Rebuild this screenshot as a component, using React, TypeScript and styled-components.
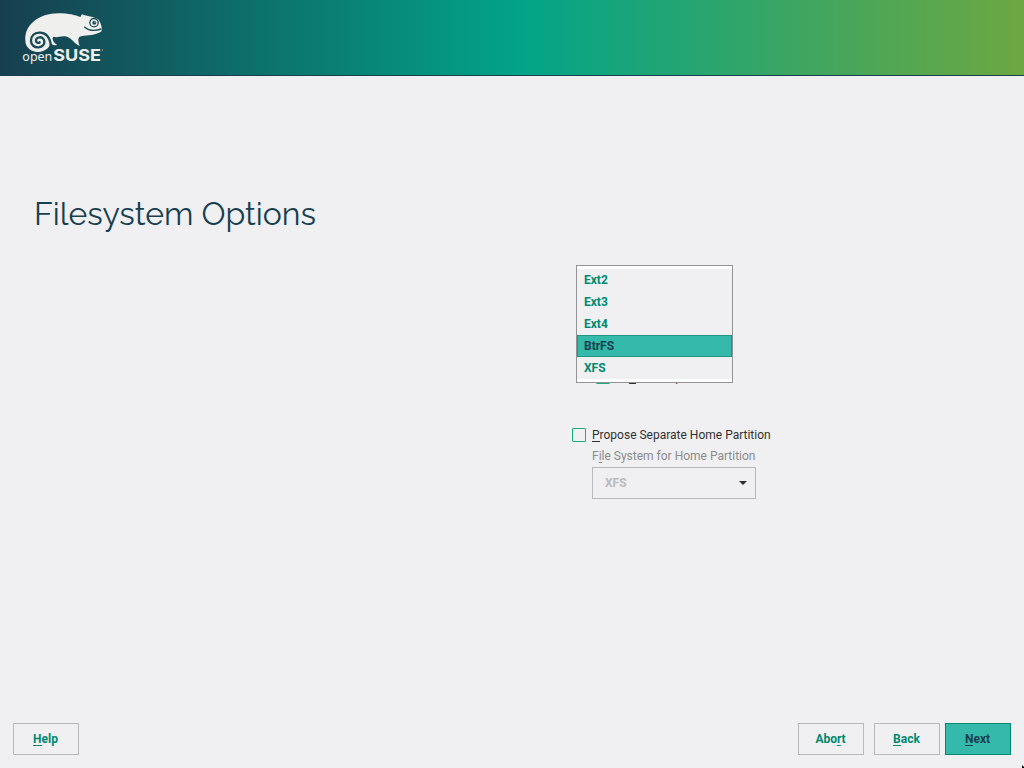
import React from 'react';
import styled, { createGlobalStyle } from 'styled-components';

const Global = createGlobalStyle`
  html, body { margin: 0; padding: 0; }
  body { background: #f0f0f2; font-family: Roboto, "Liberation Sans", sans-serif; overflow: hidden; }
  *, *::before, *::after { box-sizing: border-box; }
`;

const Screen = styled.div`
  width: 1024px;
  height: 768px;
  display: flex;
  flex-direction: column;
  background: #f0f0f2;
  position: relative;
  overflow: hidden;
  font-size: 12px;
`;

const Header = styled.header`
  height: 76px;
  flex: none;
  padding: 5px 15px 0;
  border-bottom: 1px solid #173f4f;
  background: linear-gradient(90deg, #173f4f 0%, #02a489 51%, #6da741 100%);
`;

const LogoSvg = styled.svg`
  display: block;
  overflow: visible;
`;

const Main = styled.main`
  flex: 1;
  display: flex;
  flex-direction: column;
`;

const Title = styled.h1`
  margin: 118px 0 0 34px;
  height: 40px;
  line-height: 40px;
  font-family: Raleway, Lato, sans-serif;
  font-size: 32px;
  font-weight: 400;
  color: #173f4f;
  white-space: nowrap;
`;

const Form = styled.div`
  position: relative;
  display: flex;
  flex-direction: column;
  margin: 31px 0 0 572px;
`;

const Popup = styled.ul`
  position: absolute;
  left: 4px;
  top: 0;
  width: 157px;
  height: 118px;
  margin: 0;
  padding: 3px 0;
  list-style: none;
  background: #fff;
  border: 1px solid #939393;
`;

const Option = styled.li<{ $selected?: boolean }>`
  height: 22px;
  line-height: 20px;
  padding: 0 6px;
  font-weight: 700;
  border: 1px solid ${p => (p.$selected ? '#21957f' : '#f0f0f2')};
  background: ${p => (p.$selected ? '#35b9ab' : '#f0f0f2')};
  color: ${p => (p.$selected ? '#173f4f' : '#00896f')};
`;

const CheckRow = styled.label<{ $indent?: boolean }>`
  display: flex;
  align-items: center;
  height: 20px;
  padding-left: ${p => (p.$indent ? 24 : 0)}px;
  gap: 6px;
  color: #303030;
  white-space: nowrap;
`;

const Covered = styled.div`
  padding-top: 102px;
  margin-bottom: 38px;
`;

const Box = styled.span`
  width: 14px;
  height: 14px;
  border: 1px solid #16ad7e;
  border-radius: 1px;
`;

const Key = styled.span`
  box-shadow: 0 1px 0 currentColor;
  display: inline-block;
  line-height: 12px;
`;

const FieldLabel = styled.div`
  margin-left: 20px;
  height: 22px;
  line-height: 22px;
  color: #8b8b8c;
`;

const Select = styled.div`
  display: flex;
  align-items: center;
  justify-content: space-between;
  margin-left: 20px;
  width: 164px;
  height: 32px;
  padding: 0 8px 0 12px;
  border: 1px solid #b8b9ba;
  font-weight: 700;
  color: #b9babb;
`;

const Caret = styled.span`
  border: 4px solid transparent;
  border-top-color: #2d2d2d;
  border-bottom: 0;
`;

const Footer = styled.footer`
  display: flex;
  height: 45px;
  padding: 0 13px;
`;

const Button = styled.button<{ $primary?: boolean; $gap?: number; $push?: boolean }>`
  width: 66px;
  height: 32px;
  padding: 0 1px 0 0;
  margin-left: ${p => (p.$push ? 'auto' : `${p.$gap ?? 0}px`)};
  border: 1px solid ${p => (p.$primary ? '#00896f' : '#b8b9ba')};
  border-radius: 0;
  background: ${p => (p.$primary ? '#35b9ab' : '#f0f0f2')};
  color: ${p => (p.$primary ? '#173f4f' : '#00896f')};
  font: 700 12px Roboto, "Liberation Sans", sans-serif;
`;

const Pointer = styled.svg`
  position: absolute;
  right: 0;
  bottom: 0;
`;

function Logo() {
  return (
    <LogoSvg width="100" height="70" viewBox="0 0 300 210">
      <path
        fill="#efefed"
        d="M31 106 C28 60 72 25 130 25 C160 25 180 30 196 36 L201 28 C216 34 235 34 251 44 C256 53 262 63 260 78 C250 88 226 91 207 92 C190 93 186 99 194 123 C178 118 168 95 150 94 C134 93 128 99 115 95 C109 103 117 113 127 120 C115 122 107 119 105 109 C108 127 91 141 69 141 C46 141 31 126 31 106 Z"
      />
      <path
        fill="none"
        stroke="#174b57"
        strokeWidth="7"
        strokeLinecap="round"
        d="M107 120 C105 95 91 82 73 83 C57 84 48 94 48 107 C48 120 58 128 71 127 C83 126 89 118 88 109 C87 100 80 96 73 97 C65 98 61 104 64 110 C66 114 71 115 74 112"
      />
      <circle cx="237" cy="53" r="12.5" fill="none" stroke="#174b57" strokeWidth="4" />
      <circle cx="238" cy="53" r="6" fill="#174b57" />
      <ellipse cx="240" cy="51" rx="2.5" ry="1.5" fill="#efefed" />
      <path d="M208 65 C222 78 242 78 259 72" fill="none" stroke="#174b57" strokeWidth="4" />
      <text x="22" y="169" fill="#efefed" fontFamily="Noto Sans, sans-serif" fontSize="39" textLength="90" lengthAdjust="spacingAndGlyphs">open</text>
      <text x="115" y="168" fill="#efefed" fontFamily="Inter, sans-serif" fontWeight="700" fontSize="46" textLength="143" lengthAdjust="spacingAndGlyphs">SUSE</text>
      <circle cx="262" cy="135" r="2" fill="#efefed" opacity=".6" />
    </LogoSvg>
  );
}

export default function App() {
  return (
    <Screen>
      <Global />
      <Header><Logo /></Header>
      <Main>
        <Title>Filesystem Options</Title>
        <Form>
          <Covered>
            <CheckRow $indent>
              <Box />
              <span>En<Key>a</Key>ble Snapshots</span>
            </CheckRow>
          </Covered>
          <CheckRow>
            <Box />
            <span><Key>P</Key>ropose Separate Home Partition</span>
          </CheckRow>
          <FieldLabel>F<Key>i</Key>le System for Home Partition</FieldLabel>
          <Select>XFS<Caret /></Select>
          <Popup>
            <Option>Ext2</Option>
            <Option>Ext3</Option>
            <Option>Ext4</Option>
            <Option $selected>BtrFS</Option>
            <Option>XFS</Option>
          </Popup>
        </Form>
      </Main>
      <Footer>
        <Button><Key>H</Key>elp</Button>
        <Button $push>Abo<Key>r</Key>t</Button>
        <Button $gap={10}><Key>B</Key>ack</Button>
        <Button $primary $gap={5}><Key>N</Key>ext</Button>
      </Footer>
      <Pointer width="2" height="3" viewBox="0 0 2 3"><path d="M0 0L2 2V3H0Z" fill="#000" /></Pointer>
    </Screen>
  );
}
